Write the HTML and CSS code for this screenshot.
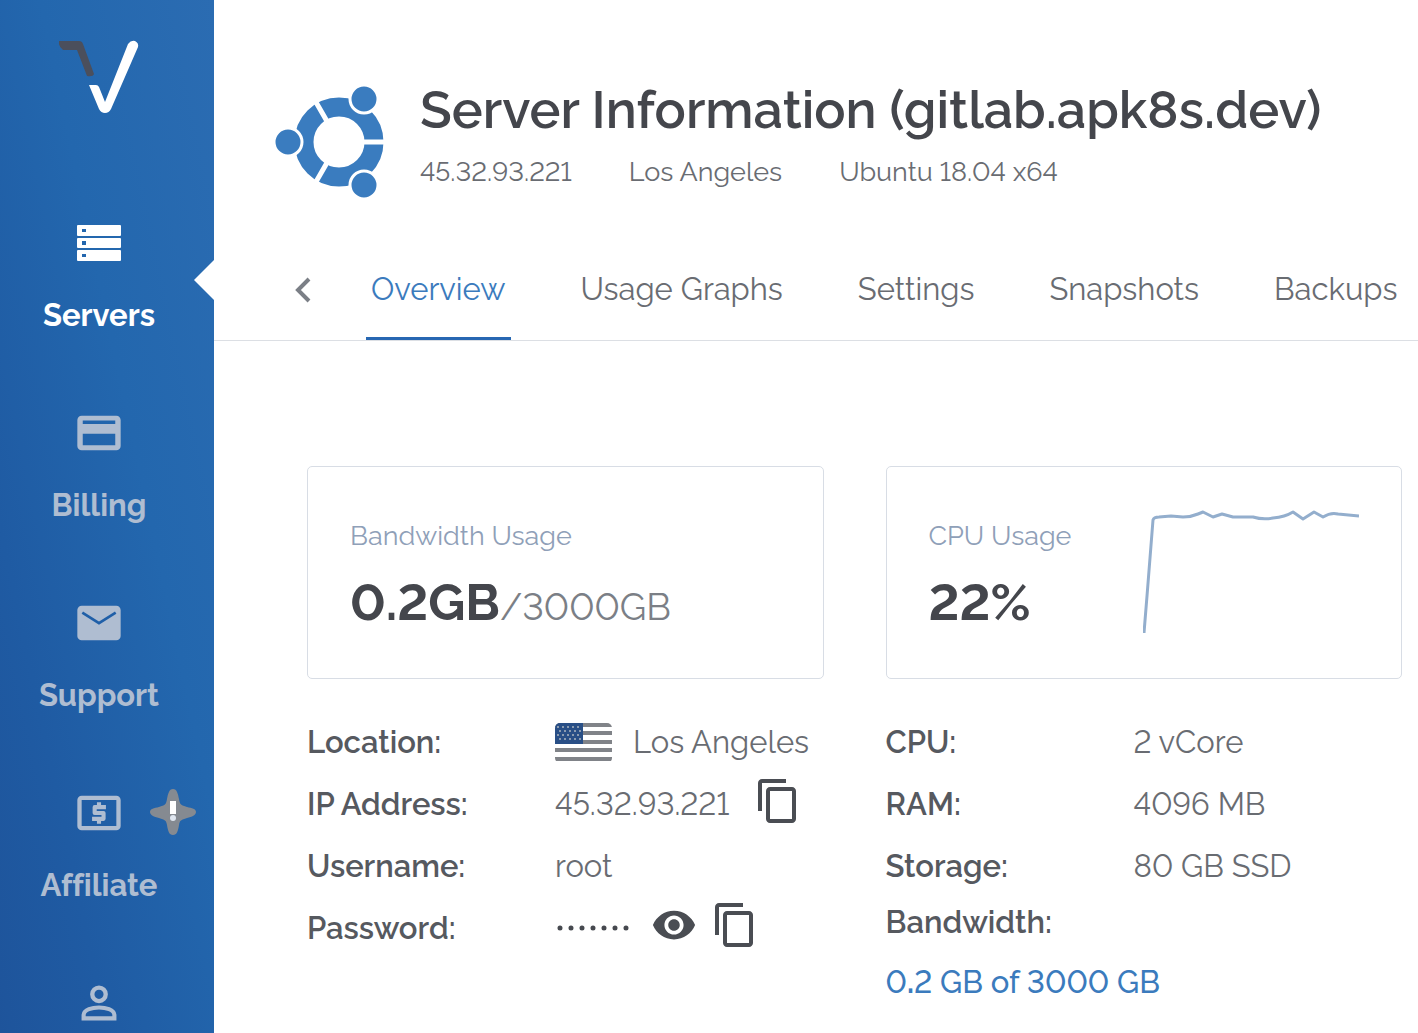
FILE: index.html
```html
<!DOCTYPE html>
<html lang="en">
<head>
<meta charset="utf-8">
<meta name="viewport" content="width=device-width, initial-scale=1">
<title>Server Information (gitlab.apk8s.dev)</title>
<link rel="stylesheet" href="styles.css">
</head>
<body>
<svg class="defs" aria-hidden="true">
  <symbol id="copy" viewBox="0 0 24 24"><path fill="currentColor" d="M16 1H4c-1.100 0-2 .9-2 2v14h2V3h12V1zm3 4H8c-1.100 0-2 .9-2 2v14c0 1.100.9 2 2 2h11c1.100 0 2-.9 2-2V7c0-1.100-.9-2-2-2zm0 16H8V7h11v14z"/></symbol>
</svg>
<div class="app">
  <nav class="sidebar" aria-label="Main">
    <a class="logo" href="#" aria-label="Home">
      <svg width="80" height="74" viewBox="59 40 80 74"><path fill="#4b4f5c" d="M59 41H79Q82 41 83 44L94 74Q93 77 87 76L77 50H63Q58 46 59 41Z"/><path fill="#fff" d="M89 85H96Q98 85 99 87L105 102 128 44Q131 40 135 41 139 43 138 47L111 109Q109 113 105 113 101 113 99 109Z"/></svg>
    </a>
    <a class="nav-item active" href="#">
      <svg class="nav-icon" viewBox="0 0 52 52"><path fill="currentColor" fill-rule="evenodd" d="M5 8H47Q48 8 48 9V18Q48 19 47 19H5Q4 19 4 18V9Q4 8 5 8ZM9 12V15H13V12ZM5 21H47Q48 21 48 22V30Q48 31 47 31H5Q4 31 4 30V22Q4 21 5 21ZM9 24V28H13V24ZM5 33H47Q48 33 48 34V43Q48 44 47 44H5Q4 44 4 43V34Q4 33 5 33ZM9 37V40H13V37Z"/></svg>
      <span>Servers</span>
    </a>
    <a class="nav-item" href="#">
      <svg class="nav-icon" viewBox="0 0 24 24"><path fill="currentColor" d="M20 4H4c-1.110 0-1.990.89-1.990 2L2 18c0 1.110.89 2 2 2h16c1.110 0 2-.89 2-2V6c0-1.110-.89-2-2-2zm-.5 13.600h-15v-5.200h15v5.200zm0-9.800h-15V6.200h15v1.600z"/></svg>
      <span>Billing</span>
    </a>
    <a class="nav-item" href="#">
      <svg class="nav-icon" viewBox="0 0 24 24"><path fill="currentColor" d="M20 4H4c-1.100 0-2 .9-2 2v12c0 1.100.9 2 2 2h16c1.100 0 2-.9 2-2V6c0-1.100-.9-2-2-2z"/><path fill="none" stroke="#1f5fa8" stroke-width="1.200" d="M4.300 7.200 12 12.100l7.700-4.900"/></svg>
      <span>Support</span>
    </a>
    <a class="nav-item" href="#">
      <svg class="nav-icon" viewBox="0 0 24 24"><rect x="3" y="5" width="18" height="14" rx="1" fill="none" stroke="currentColor" stroke-width="2"/><path fill="none" stroke="currentColor" stroke-width="1.900" stroke-linejoin="round" d="M15.200 9.300H10V12H14.100V14.700H8.800M12 7V9M12 15v2"/></svg>
      <span>Affiliate</span>
      <svg class="badge" viewBox="0 0 46 46"><path fill="#858a91" d="M23 0C27 0 28 5 29 10 30 16 31 16 37 18 42 19 46 20 46 23S42 28 37 29C31 31 30 31 29 36 28 42 27 46 23 46S18 42 17 36C16 31 15 31 9 29 4 28 0 26 0 23S4 19 9 18C15 16 16 16 17 10 18 5 19 0 23 0Z"/><path fill="#fff" d="M20 12H26V25H20Z"/><circle cx="23" cy="29" r="3" fill="#dfe6f0"/></svg>
    </a>
    <a class="nav-item" href="#" aria-label="Account">
      <svg class="nav-icon" viewBox="0 0 24 24"><circle cx="12" cy="8" r="3.100" fill="none" stroke="currentColor" stroke-width="2"/><path fill="none" stroke="currentColor" stroke-width="1.900" d="M4.900 19.100V17.500C5 15 9 14.100 12 14.100S19 15 19.100 17.500V19.100Z"/></svg>
    </a>
  </nav>

  <main class="main">
    <header class="header">
      <svg class="distro" viewBox="0 0 112 112" role="img" aria-label="Ubuntu">
        <circle cx="65" cy="56" r="35" fill="none" stroke="#3a7cbf" stroke-width="19"/>
        <path stroke="#fff" stroke-width="5" d="M85 56H112M55 38.700 39 11M55 73.300 39 101"/>
        <g fill="#3a7cbf" stroke="#fff" stroke-width="3"><circle cx="90" cy="13" r="14"/><circle cx="14" cy="56" r="14"/><circle cx="90" cy="99" r="14"/></g>
      </svg>
      <div>
        <h1>Server Information (gitlab.apk8s.dev)</h1>
        <div class="meta"><span>45.32.93.221</span><span>Los Angeles</span><span>Ubuntu 18.04 x64</span></div>
      </div>
    </header>

    <nav class="tabs" aria-label="Server sections">
      <button class="back" type="button" aria-label="Previous tabs"><svg width="18" height="26" viewBox="0 0 18 26"><path fill="none" stroke="currentColor" stroke-width="4" d="M15 2 4 13 15 24"/></svg></button>
      <a class="tab current" href="#">Overview</a>
      <a class="tab" href="#">Usage Graphs</a>
      <a class="tab" href="#">Settings</a>
      <a class="tab" href="#">Snapshots</a>
      <a class="tab" href="#">Backups</a>
    </nav>

    <div class="content">
      <section class="card">
        <div>
          <h2>Bandwidth Usage</h2>
          <p class="figure">0.2GB<span>/3000GB</span></p>
        </div>
      </section>
      <section class="card">
        <div>
          <h2>CPU Usage</h2>
          <p class="figure">22%</p>
        </div>
        <svg class="chart" width="216" height="126" viewBox="2 1 216 126" role="img" aria-label="CPU usage over time"><path fill="none" stroke="#93aecd" stroke-width="3" stroke-linejoin="round" d="M3 125 6 88 12 12Q13 9 18 9L30 8 42 9Q50 9 57 6L62 4 72 9 81 6 92 9H112Q122 12 132 10 144 9 152 4L162 11 173 4 182 9Q190 4 197 6L218 8"/></svg>
      </section>

      <dl class="details">
        <dt>Location:</dt>
        <dd><svg class="flag" width="58" height="40" viewBox="0 0 58 40" role="img" aria-label="United States"><clipPath id="fc"><rect width="57" height="40" y="1" rx="5"/></clipPath><g clip-path="url(#fc)"><path stroke="#808388" stroke-width="4" d="M0 3H58M0 11H58M0 20H58M0 28H58M0 37H58"/><path fill="#294f86" d="M0 1H28V22H0Z"/><path stroke="#8c9cb0" stroke-width="2" stroke-dasharray="2 3" d="M2 5H27M4 9H27M2 13H27M4 17H27"/></g></svg>Los Angeles</dd>
        <dt>IP Address:</dt>
        <dd>45.32.93.221<button class="icon-btn copy-ip" type="button" aria-label="Copy IP address"><svg width="48" height="48"><use href="#copy"/></svg></button></dd>
        <dt>Username:</dt>
        <dd>root</dd>
        <dt>Password:</dt>
        <dd><svg width="76" height="8" viewBox="0 0 76 8" role="img" aria-label="Hidden password"><path stroke="#46494f" stroke-width="5" stroke-linecap="round" stroke-dasharray="0 11" d="M5 4H72"/></svg><button class="icon-btn" type="button" aria-label="Show password"><svg width="46" height="46" viewBox="0 0 24 24"><path fill="currentColor" d="M12 4.500C7 4.500 2.730 7.610 1 12c1.730 4.390 6 7.500 11 7.500s9.270-3.110 11-7.500c-1.730-4.390-6-7.500-11-7.500zM12 17c-2.760 0-5-2.240-5-5s2.240-5 5-5 5 2.240 5 5-2.240 5-5 5zm0-8c-1.660 0-3 1.340-3 3s1.340 3 3 3 3-1.340 3-3-1.340-3-3-3z"/></svg></button><button class="icon-btn" type="button" aria-label="Copy password"><svg width="48" height="48"><use href="#copy"/></svg></button></dd>
      </dl>
      <dl class="details specs">
        <dt>CPU:</dt>
        <dd>2 vCore</dd>
        <dt>RAM:</dt>
        <dd>4096 MB</dd>
        <dt>Storage:</dt>
        <dd>80 GB SSD</dd>
        <dt class="wide">Bandwidth:</dt>
        <dd class="wide"><a href="#">0<b>.</b>2 GB of 3000 GB</a></dd>
      </dl>
    </div>
  </main>
</div>
</body>
</html>
```
FILE: styles.css
```css
* { box-sizing: border-box; }

body {
  margin: 0;
  background: #fff;
  color: #696c72;
  font-family: Raleway, "Open Sans", sans-serif;
  font-size: 31px;
  line-height: 40px;
  font-variant-numeric: lining-nums;
}

a { color: inherit; text-decoration: none; }
button { border: 0; padding: 0; background: none; color: inherit; cursor: pointer; }
svg { flex: none; }
h1, h2, p, dl, dd { margin: 0; }
.defs { display: none; }

.app { display: flex; min-height: 100vh; }

.sidebar {
  flex: none;
  width: 214px;
  padding: 40px 16px 0 0;
  display: flex;
  flex-direction: column;
  align-items: stretch;
  background: linear-gradient(78deg, #1e549b 0%, #1f5ba3 25%, #2367ae 60%, #2b6cb2 100%);
}

.logo { height: 177px; text-align: center; }
.logo svg { display: block; margin: 0 auto; }

.nav-item {
  position: relative;
  display: flex;
  flex-direction: column;
  align-items: center;
  gap: 26px;
  min-height: 190px;
  color: #afbdd1;
  font-weight: 700;
  font-variant-ligatures: none;
}
.nav-item:last-child { min-height: 0; }
.nav-item.active { color: #fff; }
.nav-item.active::after {
  content: "";
  position: absolute;
  top: 43px;
  right: -16px;
  border: solid transparent;
  border-width: 20px 20px 20px 0;
  border-right-color: #fff;
}
.nav-icon { width: 52px; height: 52px; }
.badge { position: absolute; top: 2px; right: 2px; width: 46px; height: 46px; }

.main { flex: 1; min-width: 0; overflow: hidden; }

.header {
  display: flex;
  align-items: flex-start;
  gap: 34px;
  padding: 78px 16px 0 60px;
  height: 240px;
  white-space: nowrap;
}
.distro { width: 112px; height: 112px; margin-top: 8px; overflow: visible; }
h1 { font-size: 52px; line-height: 64px; font-weight: 600; color: #44464c; }
.meta { display: flex; gap: 57px; margin-top: 10px; font-size: 27px; }

.tabs {
  display: flex;
  align-items: stretch;
  height: 101px;
  border-bottom: 1px solid #dcdfe4;
  white-space: nowrap;
}
.back { flex: none; width: 152px; padding: 0 0 0 80px; display: flex; align-items: center; color: #7b7f86; }
.tab { flex: none; padding: 29px 5px 0; margin-right: 65px; border-bottom: 3px solid transparent; }
.tab.current { color: #3b7bbd; border-color: #2767b2; }

.content {
  display: grid;
  grid-template-columns: 1fr 1fr;
  column-gap: 62px;
  row-gap: 38px;
  padding: 125px 16px 20px 93px;
}

.card {
  display: flex;
  justify-content: space-between;
  height: 213px;
  padding: 42px;
  border: 1px solid #d8dde5;
  border-radius: 5px;
}
h2 { margin-top: 7px; font-size: 27px; line-height: 40px; font-weight: 400; color: #8fa0b8; }
.figure { margin-top: 14px; font-size: 51px; line-height: 64px; font-weight: 700; color: #44464c; white-space: nowrap; }
.figure span { font-size: 37px; font-weight: 400; color: #7b7f86; }

.details {
  display: grid;
  grid-template-columns: 248px 1fr;
  grid-auto-rows: 62px;
  align-items: center;
  align-content: start;
  margin-top: -6px;
  white-space: nowrap;
}
.specs { grid-template-rows: 62px 62px 62px 50px 70px; }
dt { font-weight: 600; color: #56595f; }
dd { display: flex; align-items: center; }
.wide { grid-column: 1 / -1; }
.details a { color: #3b7bbd; font-weight: 500; }
.flag { margin-right: 20px; }
.icon-btn { display: flex; margin: 0 0 6px 20px; color: #4a4d53; }
.icon-btn + .icon-btn { margin-left: 14px; }
.copy-ip { margin-left: 25px; }
```
